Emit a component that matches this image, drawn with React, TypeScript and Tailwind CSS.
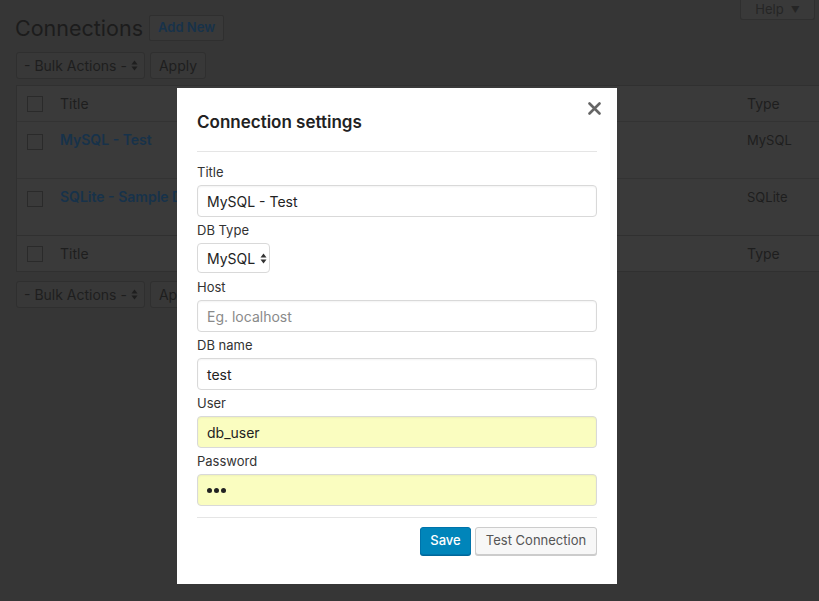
const font = { fontFamily: 'Inter, "Noto Sans", sans-serif' };

function UpDown({ className = '' }: { className?: string }) {
  return (
    <svg width="7" height="11" viewBox="0 0 7 11" className={className}>
      <path d="M3.5 0.5 L6.5 4.5 L0.5 4.5 Z" fill="currentColor" />
      <path d="M3.5 10.5 L6.5 6.5 L0.5 6.5 Z" fill="currentColor" />
    </svg>
  );
}

function BulkBar() {
  return (
    <div className="flex items-center gap-[5px] pl-4">
      <div className="flex h-[27px] w-[129px] items-center justify-between rounded-[3px] border border-[#2f2f2f] bg-[#383838] pl-[7px] pr-[6px] text-[14px] text-[#1e1e1e]">
        <span>- Bulk Actions -</span>
        <UpDown className="text-[#1e1e1e]" />
      </div>
      <div className="flex h-[27px] w-[56px] items-center justify-center rounded-[3px] border border-[#2f2f2f] bg-[#383838] text-[14px] text-[#1e1e1e]">
        Apply
      </div>
    </div>
  );
}

function Checkbox() {
  return <div className="h-4 w-4 shrink-0 border border-[#2a2a2a] bg-[#3a3a3a]" />;
}

function Row({ title, type }: { title: string; type: string }) {
  return (
    <div className="flex h-[57px] border-t border-[#333333] bg-[#3a3a3a]">
      <div className="w-[43px] pl-[10px] pt-[12px]">
        <Checkbox />
      </div>
      <div className="flex-1 pt-[8px] text-[14px] font-semibold leading-5 text-[#17324a]">{title}</div>
      <div className="w-[80px] pt-[8px] text-[13px] leading-5 text-[#1e1e1e]">{type}</div>
    </div>
  );
}

function HeadRow() {
  return (
    <div className="flex h-[35px] items-center bg-[#3a3a3a]">
      <div className="w-[43px] pl-[10px]">
        <Checkbox />
      </div>
      <div className="flex-1 text-[14px] text-[#1e1e1e]">Title</div>
      <div className="w-[80px] text-[14px] text-[#1e1e1e]">Type</div>
    </div>
  );
}

function Field({ label, children, last = false }: { label: string; children: React.ReactNode; last?: boolean }) {
  return (
    <div className={last ? '' : 'mb-[3px]'}>
      <div className="mb-[3px] text-[13px] leading-5 text-[#333333]">{label}</div>
      {children}
    </div>
  );
}

function TextBox({ value, placeholder, yellow = false, dots = false }: { value?: string; placeholder?: string; yellow?: boolean; dots?: boolean }) {
  return (
    <div
      className={
        'flex h-[32px] w-full items-center rounded-[4px] border border-[#d9d9d9] px-[9px] text-[14px] ' +
        (yellow ? 'bg-[#fafdc0] ' : 'bg-white ') +
        'shadow-[inset_0_1px_2px_rgba(0,0,0,0.05)]'
      }
    >
      {dots ? (
        <span className="flex gap-[2px]">
          <span className="h-[5px] w-[5px] rounded-full bg-[#222]" />
          <span className="h-[5px] w-[5px] rounded-full bg-[#222]" />
          <span className="h-[5px] w-[5px] rounded-full bg-[#222]" />
        </span>
      ) : value ? (
        <span className="text-[#222222]">{value}</span>
      ) : (
        <span className="text-[#8a8a8a]">{placeholder}</span>
      )}
    </div>
  );
}

export default function App() {
  return (
    <div className="relative h-[601px] w-[819px] overflow-hidden bg-[#363636]" style={font}>
      <div className="flex justify-end pr-[4px]">
        <div className="flex h-[20px] w-[75px] items-center justify-center gap-[7px] rounded-b-[3px] border border-t-0 border-[#2f2f2f] bg-[#393939] text-[13px] text-[#252525]">
          <span>Help</span>
          <span className="text-[9px]">▼</span>
        </div>
      </div>

      <div className="-mt-[7px] flex items-center gap-[6px] pl-[15px]">
        <h1 className="text-[21.5px] leading-[30px] text-[#1c1c1c]">Connections</h1>
        <div className="flex h-[26px] items-center rounded-[2px] border border-[#2f2f2f] bg-[#393939] px-[8px] text-[13px] font-semibold text-[#17324a]">
          Add New
        </div>
      </div>

      <div className="mt-[9px]">
        <BulkBar />
      </div>

      <div className="ml-4 mt-[6px] w-[812px] border border-[#303030]">
        <HeadRow />
        <Row title="MySQL - Test" type="MySQL" />
        <Row title="SQLite - Sample DB" type="SQLite" />
        <div className="border-t border-[#303030]">
          <HeadRow />
        </div>
      </div>

      <div className="mt-[9px]">
        <BulkBar />
      </div>

      {/* modal */}
      <div className="absolute left-[177px] top-[88px] w-[440px] bg-white px-5 pb-[29px] pt-[21px]">
        <div className="absolute right-[16px] top-[14px] text-[#666666]">
          <svg width="13" height="13" viewBox="0 0 13 13">
            <path d="M1.5 1.5 L11.5 11.5 M11.5 1.5 L1.5 11.5" stroke="currentColor" strokeWidth="2.6" strokeLinecap="round" />
          </svg>
        </div>
        <h2 className="text-[17px] font-semibold leading-[26px] text-[#222222]">Connection settings</h2>
        <div className="mb-[10px] mt-[16px] h-px bg-[#e5e5e5]" />

        <Field label="Title">
          <TextBox value="MySQL - Test" />
        </Field>
        <div className="mb-[4px]">
          <div className="mb-[3px] text-[13px] leading-5 text-[#333333]">DB Type</div>
          <div className="flex h-[30px] w-[73px] items-center gap-[5px] rounded-[4px] border border-[#d9d9d9] bg-white pl-[9px] text-[14px] text-[#222222]">
            <span>MySQL</span>
            <UpDown className="text-[#333333]" />
          </div>
        </div>
        <Field label="Host">
          <TextBox placeholder="Eg. localhost" />
        </Field>
        <Field label="DB name">
          <TextBox value="test" />
        </Field>
        <Field label="User">
          <TextBox value="db_user" yellow />
        </Field>
        <Field label="Password" last>
          <TextBox yellow dots />
        </Field>

        <div className="mb-[9px] mt-[11px] h-px bg-[#e5e5e5]" />

        <div className="flex justify-end gap-[4px]">
          <div className="flex h-[28px] w-[51px] items-center justify-center rounded-[3px] border border-[#0073aa] bg-[#0085ba] text-[13px] font-medium text-white shadow-[0_1px_0_#006799]">
            Save
          </div>
          <div className="flex h-[28px] w-[122px] items-center justify-center rounded-[3px] border border-[#cccccc] bg-[#f7f7f7] text-[13px] text-[#555555] shadow-[0_1px_0_#cccccc]">
            Test Connection
          </div>
        </div>
      </div>
    </div>
  );
}
